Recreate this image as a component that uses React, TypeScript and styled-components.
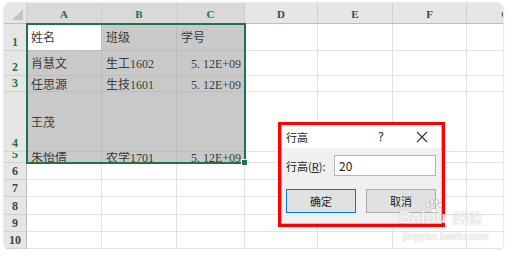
import styled, { createGlobalStyle } from 'styled-components';

const GlobalStyle = createGlobalStyle`
  body {
    margin: 0;
    background: #fff;
    font-family: "Liberation Serif", "Noto Sans CJK SC", serif;
  }
`;

const columns = ['A', 'B', 'C', 'D', 'E', 'F', 'G'];
const colWidths = [75, 75, 68, 73, 75, 74, 78];
const rowHeights = [27, 25, 16, 60, 11, 17, 17, 18, 17, 17];

type CellData = { text: string; right?: boolean };

const data: CellData[][] = [
  [{ text: '姓名' }, { text: '班级' }, { text: '学号' }],
  [{ text: '肖慧文' }, { text: '生工1602' }, { text: '5. 12E+09', right: true }],
  [{ text: '任思源' }, { text: '生技1601' }, { text: '5. 12E+09', right: true }],
  [{ text: '王茂' }, { text: '' }, { text: '' }],
  [{ text: '朱怡倩' }, { text: '农学1701' }, { text: '5. 12E+09', right: true }],
];

const isSelected = (row: number, col: number) => row < 5 && col < 3;

export default function App() {
  return (
    <>
      <GlobalStyle />
      <Frame>
        <Sheet>
          <Corner>
            <CornerMark />
          </Corner>
          {columns.map((c, i) => (
            <ColHeader key={c} $col={i + 2} $selected={i < 3}>
              {c}
            </ColHeader>
          ))}
          {rowHeights.map((_, r) => (
            <Row key={r} r={r} />
          ))}
          <Selection>
            <FillHandle />
          </Selection>
        </Sheet>

        <Highlight>
          <Dialog>
            <TitleBar>
              <Title>行高</Title>
              <Help>?</Help>
              <Close>
                <svg width="12" height="12" viewBox="0 0 12 12">
                  <path d="M1 1 L11 11 M11 1 L1 11" stroke="#333" strokeWidth="1.1" fill="none" />
                </svg>
              </Close>
            </TitleBar>
            <Body>
              <FieldRow>
                <Label>
                  行高(<u>R</u>):
                </Label>
                <Input>20</Input>
              </FieldRow>
              <Buttons>
                <Button $primary>确定</Button>
                <Button>取消</Button>
              </Buttons>
            </Body>
          </Dialog>
        </Highlight>

        <Watermark>
          <WmTop>
            <span>Bai</span>
            <WmDu>
              du
              <Paw width="18" height="15" viewBox="0 0 18 15">
                <g fill="rgba(255,255,255,0.85)" stroke="rgba(140,140,140,0.55)" strokeWidth="0.8">
                  <ellipse cx="3" cy="6" rx="1.8" ry="2.3" />
                  <ellipse cx="7" cy="2.8" rx="1.8" ry="2.3" />
                  <ellipse cx="11.5" cy="2.8" rx="1.8" ry="2.3" />
                  <ellipse cx="15" cy="6" rx="1.8" ry="2.3" />
                  <path d="M4.5 13.5 Q9 5 13.5 13.5 Z" />
                </g>
              </Paw>
            </WmDu>
            <WmCn>经验</WmCn>
          </WmTop>
          <WmUrl>jingyan.baidu.com</WmUrl>
        </Watermark>
      </Frame>
    </>
  );
}

function Row({ r }: { r: number }) {
  const rowData = data[r];
  return (
    <>
      <RowHeader $row={r + 2} $selected={r < 5}>
        {r + 1}
      </RowHeader>
      {columns.map((_, c) => {
        const cell = rowData && rowData[c];
        return (
          <Cell
            key={c}
            $row={r + 2}
            $col={c + 2}
            $selected={isSelected(r, c)}
            $active={r === 0 && c === 0}
            $right={!!cell?.right}
          >
            {cell ? <CellText>{cell.text}</CellText> : null}
          </Cell>
        );
      })}
    </>
  );
}

const Frame = styled.div`
  position: relative;
  margin: 3px 0 0 4px;
  width: 499px;
  height: 247px;
  border-radius: 7px;
  overflow: hidden;
  background: #fff;
  box-shadow: 0 0 2px rgba(0, 0, 0, 0.3);
`;

const Sheet = styled.div`
  display: grid;
  grid-template-columns: 23px ${colWidths.map((w) => `${w}px`).join(' ')};
  grid-template-rows: 21px ${rowHeights.map((h) => `${h}px`).join(' ')};
`;

const Corner = styled.div`
  position: relative;
  grid-row: 1;
  grid-column: 1;
  background: #e6e6e6;
  border-right: 1px solid #cfcfcf;
  border-bottom: 1px solid #bdbdbd;
  box-sizing: border-box;
`;

const CornerMark = styled.div`
  position: absolute;
  right: 3px;
  bottom: 3px;
  width: 0;
  height: 0;
  border-left: 11px solid transparent;
  border-bottom: 11px solid #c4c4c4;
`;

const ColHeader = styled.div<{ $col: number; $selected?: boolean }>`
  grid-row: 1;
  grid-column: ${(p) => p.$col};
  display: flex;
  align-items: center;
  justify-content: center;
  box-sizing: border-box;
  background: ${(p) => (p.$selected ? '#d9d9d9' : '#e6e6e6')};
  border-right: 1px solid #cfcfcf;
  border-bottom: 1px solid ${(p) => (p.$selected ? '#9fb8a8' : '#bdbdbd')};
  color: ${(p) => (p.$selected ? '#217346' : '#444')};
  font-size: 11px;
  font-weight: bold;
  padding-top: 1px;
`;

const RowHeader = styled.div<{ $row: number; $selected?: boolean }>`
  grid-row: ${(p) => p.$row};
  grid-column: 1;
  display: flex;
  align-items: flex-end;
  justify-content: center;
  box-sizing: border-box;
  overflow: hidden;
  background: #e6e6e6;
  border-right: 1px solid #bdbdbd;
  border-bottom: 1px solid #d2d2d2;
  color: ${(p) => (p.$selected ? '#217346' : '#444')};
  font-size: 12px;
  font-weight: bold;
  line-height: 14px;
  padding-bottom: 1px;
`;

const Cell = styled.div<{
  $row: number;
  $col: number;
  $selected?: boolean;
  $active?: boolean;
  $right?: boolean;
}>`
  grid-row: ${(p) => p.$row};
  grid-column: ${(p) => p.$col};
  display: flex;
  align-items: center;
  justify-content: ${(p) => (p.$right ? 'flex-end' : 'flex-start')};
  box-sizing: border-box;
  overflow: hidden;
  padding: 0 ${(p) => (p.$right ? '3px' : '0')} 0 ${(p) => (p.$right ? '0' : '4px')};
  background: ${(p) => (p.$active ? '#fff' : p.$selected ? '#c9c9c9' : '#fff')};
  border-right: 1px solid ${(p) => (p.$selected ? '#bdbdbd' : '#e2e2e2')};
  border-bottom: 1px solid ${(p) => (p.$selected ? '#bdbdbd' : '#e2e2e2')};
  color: #3b3b3b;
  font-size: 12px;
`;

const CellText = styled.span`
  white-space: nowrap;
  line-height: 14px;
  margin-top: 2px;
`;

const Selection = styled.div`
  position: relative;
  grid-column: 2 / 5;
  grid-row: 2 / 7;
  margin: -1px;
  border: 2px solid #217346;
  pointer-events: none;
`;

const FillHandle = styled.div`
  position: absolute;
  right: -4px;
  bottom: -4px;
  width: 5px;
  height: 5px;
  background: #217346;
  border: 1px solid #fff;
`;

const Highlight = styled.div`
  position: absolute;
  left: 274px;
  top: 119px;
  width: 167px;
  height: 105px;
  box-sizing: border-box;
  border: 3px solid #ff0000;
  background: #f0f0f0;
`;

const Dialog = styled.div`
  display: flex;
  flex-direction: column;
  height: 100%;
  box-sizing: border-box;
  border: 1px solid #a9c4e4;
  border-top: none;
  font-family: "Noto Sans CJK SC", "DejaVu Sans", sans-serif;
  color: #222;
`;

const TitleBar = styled.div`
  display: flex;
  align-items: center;
  height: 23px;
  background: #fff;
  padding-left: 4px;
  font-size: 11px;
`;

const Title = styled.div`
  flex: 1;
`;

const Help = styled.div`
  width: 20px;
  text-align: center;
  font-family: "DejaVu Sans", sans-serif;
  font-size: 12px;
  color: #333;
  margin-right: 18px;
`;

const Close = styled.div`
  display: flex;
  align-items: center;
  justify-content: center;
  width: 26px;
  margin-right: 6px;
`;

const Body = styled.div`
  display: flex;
  flex-direction: column;
  padding: 7px 5px 0 4px;
`;

const FieldRow = styled.div`
  display: flex;
  align-items: center;
`;

const Label = styled.div`
  width: 48px;
  font-size: 11px;
  white-space: nowrap;
`;

const Input = styled.div`
  flex: 1;
  height: 21px;
  box-sizing: border-box;
  display: flex;
  align-items: center;
  padding-left: 4px;
  background: #fff;
  border: 1px solid #b4b4b4;
  font-size: 12px;
  color: #222;
`;

const Buttons = styled.div`
  display: flex;
  gap: 10px;
  margin-top: 13px;
`;

const Button = styled.div<{ $primary?: boolean }>`
  width: 70px;
  height: 24px;
  box-sizing: border-box;
  display: flex;
  align-items: center;
  justify-content: center;
  background: #e1e1e1;
  border: 1px solid ${(p) => (p.$primary ? '#0078d7' : '#adadad')};
  font-size: 11px;
`;

const Watermark = styled.div`
  position: absolute;
  left: 395px;
  top: 205px;
  display: flex;
  flex-direction: column;
  white-space: nowrap;
  pointer-events: none;
  color: rgba(255, 255, 255, 0.9);
  text-shadow: 0 0 1px rgba(100, 100, 100, 0.55);
  font-family: "Liberation Sans", "Noto Sans CJK SC", sans-serif;
`;

const WmTop = styled.div`
  display: flex;
  align-items: flex-end;
  font-size: 17px;
  font-weight: bold;
  line-height: 20px;
`;

const WmDu = styled.span`
  position: relative;
`;

const Paw = styled.svg`
  position: absolute;
  left: 0;
  top: -9px;
`;

const WmCn = styled.span`
  margin-left: 6px;
  font-size: 15px;
  font-weight: normal;
  font-family: "Noto Sans CJK SC", sans-serif;
  line-height: 20px;
`;

const WmUrl = styled.div`
  font-size: 10px;
  line-height: 12px;
  margin-top: 3px;
  margin-left: 4px;
  letter-spacing: 0.3px;
`;
